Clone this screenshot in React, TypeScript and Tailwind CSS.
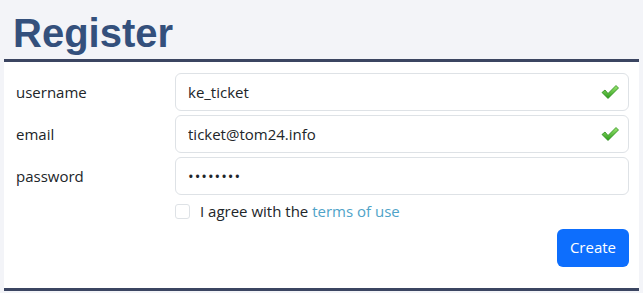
import { useState } from "react";

function GreenCheck() {
  return (
    <svg width="18" height="16" viewBox="0 0 18 16" className="absolute right-[10px] top-1/2 -translate-y-1/2">
      <defs>
        <linearGradient id="ck" x1="0" y1="0" x2="0" y2="1">
          <stop offset="0" stopColor="#9be870" />
          <stop offset="1" stopColor="#2c9a1c" />
        </linearGradient>
      </defs>
      <path d="M1 8.5 L4 6 L7 9.5 L15 1.5 L17.5 4 L7 14.5 Z" fill="url(#ck)" stroke="#2a8a1a" strokeWidth="0.8" strokeLinejoin="round" />
    </svg>
  );
}

function Field({ label, value, type = "text", ok }: { label: string; value: string; type?: string; ok?: boolean }) {
  const [v, setV] = useState(value);
  return (
    <div className="flex items-center">
      <label className="w-[171px] shrink-0 pl-[12px] text-[15px] text-[#212529]">{label}</label>
      <div className="relative flex-1">
        <input
          type={type}
          value={v}
          onChange={(e) => setV(e.target.value)}
          className={`w-full h-[38px] px-[12px] text-[15px] text-[#212529] bg-white border border-[#dee2e6] rounded-[6px] outline-none ${type === "password" ? "tracking-[1px]" : ""}`}
        />
        {ok && <GreenCheck />}
      </div>
    </div>
  );
}

export default function App() {
  return (
    <div className="w-[643px] h-[293px] bg-[#f3f4f8] px-[4px] overflow-hidden" style={{ fontFamily: '"Open Sans", "Noto Sans", sans-serif' }}>
      <div className="h-[59px] flex items-end pl-[9px]">
        <h1 className="text-[40px] leading-none font-bold text-[#34507c] pb-[6px]" style={{ fontFamily: '"Liberation Sans", Arial, sans-serif' }}>
          Register
        </h1>
      </div>
      <div className="w-[635px] bg-white border-t-[3px] border-b-[3px] border-[#3b4561] h-[232px]">
        <form className="pt-[11px] pr-[10px] flex flex-col gap-[4px]" onSubmit={(e) => e.preventDefault()}>
          <Field label="username" value="ke_ticket" ok />
          <Field label="email" value="ticket@tom24.info" ok />
          <Field label="password" value="password" type="password" />
          <div className="pl-[171px] pt-[1px] flex items-center gap-[10px] text-[15px] text-[#212529]">
            <input type="checkbox" className="w-[15px] h-[15px] appearance-none border border-[#dee2e6] rounded-[3px] bg-white" />
            <span>
              I agree with the <a href="#" className="text-[#4fa3c8]">terms of use</a>
            </span>
          </div>
          <div className="flex justify-end pt-[2px]">
            <button className="h-[38px] px-[13px] bg-[#0d6efd] text-white text-[15px] rounded-[6px]">Create</button>
          </div>
        </form>
      </div>
    </div>
  );
}
